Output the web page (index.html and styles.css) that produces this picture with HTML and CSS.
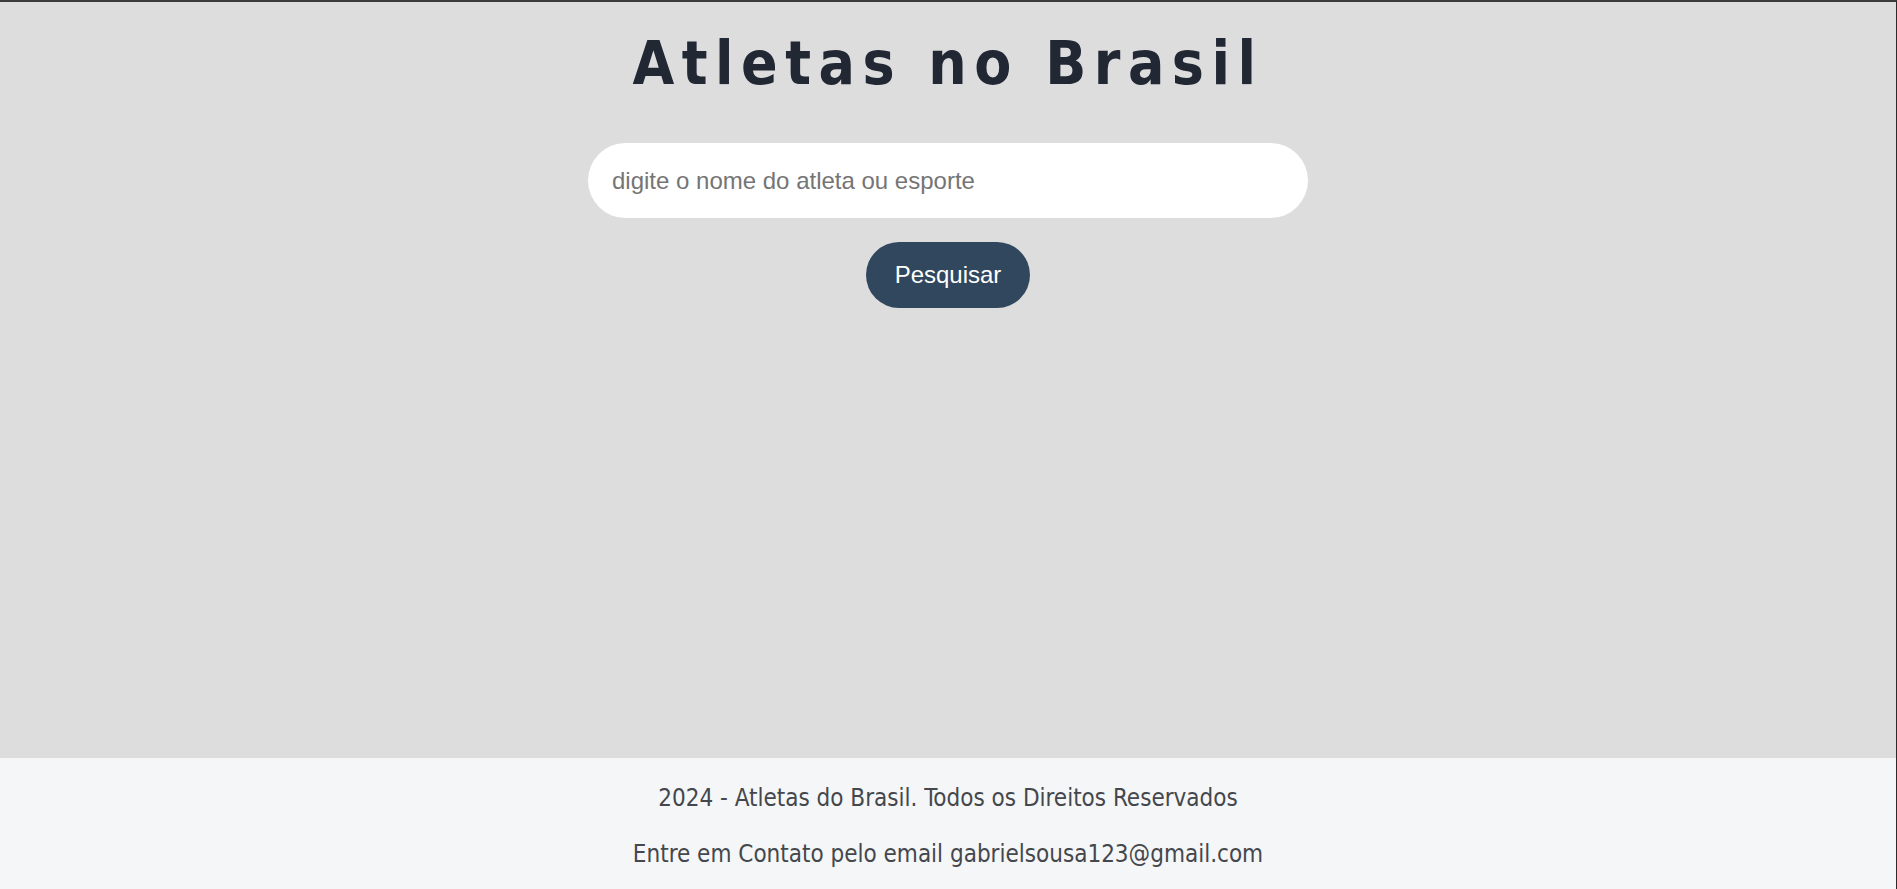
FILE: index.html
```html
<!DOCTYPE html>
<html lang="pt-BR">
<head>
<meta charset="UTF-8">
<title>Atletas no Brasil</title>
<link rel="stylesheet" href="styles.css">
</head>
<body>
<main class="main">
  <h1 class="title">Atletas no Brasil</h1>
  <form class="search">
    <input class="search-input" type="text" placeholder="digite o nome do atleta ou esporte">
    <button class="search-btn" type="button">Pesquisar</button>
  </form>
</main>
<footer class="footer">
  <p class="footer-line">2024 - Atletas do Brasil. Todos os Direitos Reservados</p>
  <p class="footer-line">Entre em Contato pelo email gabrielsousa123@gmail.com</p>
</footer>
</body>
</html>
```

FILE: styles.css
```css
* { box-sizing: border-box; }

html, body { margin: 0; padding: 0; }

body {
  height: 100vh;
  display: flex;
  flex-direction: column;
  background: #dddddd;
  border-top: 2px solid #3b3b3b;
  border-right: 1px solid #2b2b2b;
  overflow: hidden;
}

.main {
  flex: 1;
  display: flex;
  flex-direction: column;
  align-items: center;
  padding-top: 25px;
}

.title {
  margin: 0;
  font-family: "DejaVu Sans Condensed", "DejaVu Sans", sans-serif;
  font-stretch: condensed;
  font-weight: bold;
  font-size: 60px;
  line-height: 72px;
  letter-spacing: 7.5px;
  color: #212834;
}

.search {
  margin-top: 44px;
  display: flex;
  flex-direction: column;
  align-items: center;
  gap: 24px;
}

.search-input {
  width: 720px;
  height: 75px;
  border: none;
  outline: none;
  border-radius: 40px;
  background: #ffffff;
  padding: 0 24px;
  font-family: "Liberation Sans", Arial, sans-serif;
  font-size: 24px;
  color: #333;
}

.search-input::placeholder { color: #757575; }

.search-btn {
  height: 66px;
  padding: 0 29px;
  border: none;
  border-radius: 34px;
  background: #30475e;
  color: #ffffff;
  font-family: "Liberation Sans", Arial, sans-serif;
  font-size: 24px;
  cursor: pointer;
}

.footer {
  height: 131px;
  flex-shrink: 0;
  background: #f5f6f8;
  display: flex;
  flex-direction: column;
  align-items: center;
  padding-top: 27px;
  gap: 29px;
}

.footer-line {
  margin: 0;
  font-family: "DejaVu Sans Condensed", "DejaVu Sans", sans-serif;
  font-stretch: condensed;
  font-size: 24px;
  line-height: 27px;
  color: #44474c;
}
```
